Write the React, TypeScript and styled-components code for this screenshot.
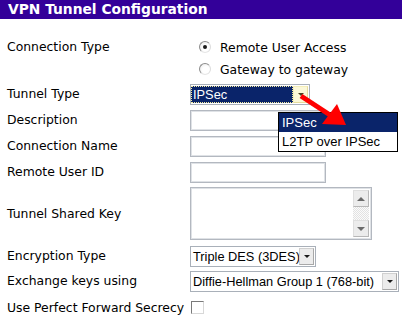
import styled, {createGlobalStyle} from 'styled-components'

const GlobalStyle = createGlobalStyle`
  body {
    margin: 0;
    background: #ffffff;
    font-family: 'DejaVu Sans', Verdana, sans-serif;
    font-size: 12.4px;
    color: #000000;
  }
`

const Page = styled.div`
  position: relative;
  width: 402px;
  height: 317px;
  overflow: hidden;
  background: #ffffff;
`

const TitleBar = styled.div`
  height: 19px;
  padding-left: 8px;
  background: #330099;
  color: #ffffff;
  font-weight: 700;
  font-size: 13.8px;
  line-height: 19px;
`

const Form = styled.div`
  display: flex;
  flex-direction: column;
  padding: 17px 0 0 7px;
`

type RowProps = {
  $height: number
  $gap?: number
}

const Row = styled.div<RowProps>`
  display: grid;
  grid-template-columns: 183px 1fr;
  align-items: center;
  height: ${(p) => p.$height}px;
  margin-top: ${(p) => p.$gap ?? 5}px;
`

const Label = styled.div<{$top?: boolean}>`
  align-self: ${(p) => (p.$top ? 'start' : 'center')};
  line-height: 22px;
  white-space: nowrap;
`

const RadioGroup = styled.div`
  display: flex;
  flex-direction: column;
  padding-left: 9px;
`

const RadioLine = styled.div`
  display: flex;
  align-items: center;
  gap: 9px;
  height: 22px;
`

const Radio = styled.span<{$checked?: boolean}>`
  position: relative;
  width: 10px;
  height: 10px;
  border-radius: 50%;
  border: 1px solid;
  border-color: #8c8c8c #dcdcdc #e6e6e6 #8c8c8c;
  background: radial-gradient(circle at 60% 60%, #ffffff 40%, #e4e4e4 100%);

  &::after {
    content: '';
    display: ${(p) => (p.$checked ? 'block' : 'none')};
    position: absolute;
    left: 3px;
    top: 3px;
    width: 4px;
    height: 4px;
    border-radius: 50%;
    background: #1a1a1a;
  }
`

type SelectBoxProps = {
  $width: number
}

const SelectBox = styled.div<SelectBoxProps>`
  display: flex;
  align-items: stretch;
  box-sizing: border-box;
  width: ${(p) => p.$width}px;
  height: 21px;
  padding: 1px 1px 1px 0;
  border: 1px solid #a9b0b9;
  font-family: 'Liberation Sans', Arial, sans-serif;
  font-size: 12.8px;
`

const SelectValue = styled.div<{$focused?: boolean}>`
  flex: 1;
  display: flex;
  align-items: center;
  padding-left: 2px;
  white-space: nowrap;
  overflow: hidden;
  background: ${(p) => (p.$focused ? '#0a246a' : '#ffffff')};
  color: ${(p) => (p.$focused ? '#ffffff' : '#000000')};
  outline: ${(p) => (p.$focused ? '1px dotted #f2eaa0' : 'none')};
  outline-offset: -1px;
`

const SelectButton = styled.div<{$hover?: boolean}>`
  display: flex;
  align-items: center;
  justify-content: center;
  width: 15px;
  flex-shrink: 0;
  box-sizing: border-box;
  background: ${(p) => (p.$hover ? '#fbf8d8' : '#ececec')};
  border: 1px solid ${(p) => (p.$hover ? '#f4eeb8' : '#d0d0d0')};
  border-right-color: ${(p) => (p.$hover ? '#e6dc9c' : '#a8a8a8')};
  border-bottom-color: ${(p) => (p.$hover ? '#e6dc9c' : '#a8a8a8')};

  &::after {
    content: '';
    border-left: 3px solid transparent;
    border-right: 3px solid transparent;
    border-top: 3px solid ${(p) => (p.$hover ? '#4a4020' : '#1a1a1a')};
    margin-top: 1px;
  }
`

const TextBox = styled.div<{$width: number; $height?: number}>`
  position: relative;
  box-sizing: border-box;
  width: ${(p) => p.$width}px;
  height: ${(p) => p.$height ?? 21}px;
  border: 1px solid #b3b8c0;
  box-shadow: inset 0 0 0 1px #dfe2e6;
  background: #ffffff;
`

const ScrollBar = styled.div`
  position: absolute;
  top: 2px;
  right: 2px;
  bottom: 2px;
  width: 16px;
  display: flex;
  flex-direction: column;
  background-color: #f4f4f4;
  background-image: repeating-conic-gradient(#e2e2e2 0 25%, #fbfbfb 0 50%);
  background-size: 2px 2px;
`

const ScrollButton = styled.div<{$down?: boolean}>`
  display: flex;
  align-items: center;
  justify-content: center;
  height: 15px;
  background: #ececec;
  border: 1px solid #dedede;
  border-right-color: #b8b8b8;
  border-bottom-color: #b8b8b8;
  margin-top: ${(p) => (p.$down ? 'auto' : '0')};

  &::after {
    content: '';
    border-left: 4px solid transparent;
    border-right: 4px solid transparent;
    border-top: ${(p) => (p.$down ? '4px solid #6a6a6a' : 'none')};
    border-bottom: ${(p) => (p.$down ? 'none' : '4px solid #6a6a6a')};
  }
`

const CheckRow = styled.div`
  display: flex;
  align-items: center;
  height: 21px;
  margin-top: 5px;
  white-space: nowrap;
`

const Checkbox = styled.span`
  width: 11px;
  height: 11px;
  margin-left: 7px;
  border: 1px solid;
  border-color: #7a7a7a #d8d8d8 #d8d8d8 #7a7a7a;
  background: #ffffff;
`

const Dropdown = styled.div`
  position: absolute;
  left: 278px;
  top: 112px;
  width: 118px;
  border: 1px solid #000000;
  background: #ffffff;
  font-family: 'Liberation Sans', Arial, sans-serif;
  font-size: 13px;
`

const DropdownItem = styled.div<{$active?: boolean}>`
  height: 19px;
  line-height: 19px;
  padding-left: 3px;
  white-space: nowrap;
  background: ${(p) => (p.$active ? '#0a246a' : '#ffffff')};
  color: ${(p) => (p.$active ? '#ffffff' : '#000000')};
`

const Overlay = styled.svg`
  position: absolute;
  left: 0;
  top: 0;
  pointer-events: none;
`

const Select = ({
  value,
  width,
  focused,
}: {
  value: string
  width: number
  focused?: boolean
}) => (
  <SelectBox $width={width}>
    <SelectValue $focused={focused}>{value}</SelectValue>
    <SelectButton $hover={focused} />
  </SelectBox>
)

export default function App() {
  return (
    <Page>
      <GlobalStyle />
      <TitleBar>VPN Tunnel Configuration</TitleBar>
      <Form>
        <Row $height={44} $gap={0}>
          <Label $top>Connection Type</Label>
          <RadioGroup>
            <RadioLine>
              <Radio $checked />
              Remote User Access
            </RadioLine>
            <RadioLine>
              <Radio />
              Gateway to gateway
            </RadioLine>
          </RadioGroup>
        </Row>
        <Row $height={21} $gap={3}>
          <Label>Tunnel Type</Label>
          <Select value="IPSec" width={120} focused />
        </Row>
        <Row $height={21}>
          <Label>Description</Label>
          <TextBox $width={136} />
        </Row>
        <Row $height={21}>
          <Label>Connection Name</Label>
          <TextBox $width={136} />
        </Row>
        <Row $height={21}>
          <Label>Remote User ID</Label>
          <TextBox $width={136} />
        </Row>
        <Row $height={53}>
          <Label>Tunnel Shared Key</Label>
          <TextBox $width={182} $height={53}>
            <ScrollBar>
              <ScrollButton />
              <ScrollButton $down />
            </ScrollBar>
          </TextBox>
        </Row>
        <Row $height={21}>
          <Label>Encryption Type</Label>
          <Select value="Triple DES (3DES)" width={126} />
        </Row>
        <Row $height={22} $gap={4}>
          <Label>Exchange keys using</Label>
          <Select value="Diffie-Hellman Group 1 (768-bit)" width={209} />
        </Row>
        <CheckRow>
          Use Perfect Forward Secrecy
          <Checkbox />
        </CheckRow>
      </Form>
      <Dropdown>
        <DropdownItem $active>IPSec</DropdownItem>
        <DropdownItem>L2TP over IPSec</DropdownItem>
      </Dropdown>
      <Overlay width={402} height={317} viewBox="0 0 402 317">
        <line x1={301} y1={96} x2={330} y2={115} stroke="#ff0000" strokeWidth={5} />
        <polygon points="346,125 322,124 337,104" fill="#ff0000" />
      </Overlay>
    </Page>
  )
}
